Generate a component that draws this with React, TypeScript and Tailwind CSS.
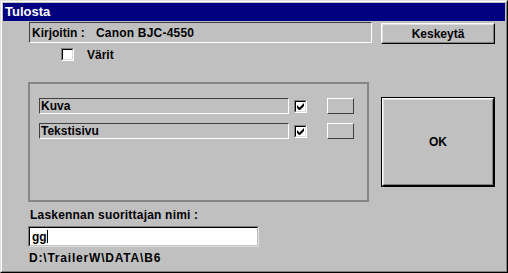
import React from 'react';

const font = { fontFamily: '"Liberation Sans", Arial, sans-serif' };

const Check = ({ checked }: { checked?: boolean }) => (
  <div className="w-[13px] h-[13px] bg-white border border-t-[#808080] border-l-[#808080] border-r-white border-b-white shrink-0">
    <div className="w-full h-full border border-t-black border-l-black border-r-[#dfdfdf] border-b-[#dfdfdf] flex items-center justify-center">
      {checked && (
        <svg width="7" height="7" viewBox="0 0 7 7">
          <path d="M0 2v3l2 2h1l4-4V0L2.5 4.5z" fill="black" />
        </svg>
      )}
    </div>
  </div>
);

const ListRow = ({ label }: { label: string }) => (
  <div className="flex items-center h-[16px]">
    <div className="w-[250px] h-[16px] border border-t-[#404040] border-l-[#404040] border-r-white border-b-white flex items-center pl-[1px] text-[12px] font-bold text-black leading-none">
      {label}
    </div>
    <div className="ml-[5px]">
      <Check checked />
    </div>
    <div className="ml-[20px] w-[27px] h-[16px] border border-t-white border-l-white border-r-[#404040] border-b-[#404040] bg-[#c0c0c0]" />
  </div>
);

export default function App() {
  return (
    <div className="w-[508px] h-[273px] bg-[#c0c0c0] border border-t-[#dfdfdf] border-l-[#dfdfdf] border-r-black border-b-black" style={font}>
      <div className="w-full h-full border border-t-white border-l-white border-r-[#808080] border-b-[#808080] p-[1px] flex flex-col">
        <div className="h-[18px] bg-[#000080] text-white font-bold text-[13px] flex items-center pl-[2px] shrink-0">
          Tulosta
        </div>
        <div className="flex">
          {/* left column */}
          <div className="ml-[25px] w-[344px] flex flex-col">
            <div className="mt-[1px] ml-[1px] h-[21px] border border-t-[#404040] border-l-[#404040] border-r-white border-b-white flex items-center text-[12px] font-bold text-black">
              <span className="w-[66px] pl-[2px]">Kirjoitin :</span>
              <span className="tracking-[0.2px]">Canon BJC-4550</span>
            </div>
            <div className="mt-[5px] ml-[33px] h-[13px] flex items-center">
              <Check />
              <span className="ml-[13px] text-[12px] font-bold text-black">Värit</span>
            </div>
            <div className="mt-[21px] w-[341px] h-[120px] border-2 border-[#868686] pt-[14px] pl-[9px] flex flex-col gap-[9px]">
              <ListRow label="Kuva" />
              <ListRow label="Tekstisivu" />
            </div>
            <div className="mt-[6px] ml-[2px] text-[12px] font-bold text-black leading-[14px] tracking-[0.2px]">
              Laskennan suorittajan nimi :
            </div>
            <div className="mt-[4px] w-[231px] h-[21px] bg-white border border-t-[#808080] border-l-[#808080] border-r-[#dfdfdf] border-b-[#dfdfdf]">
              <div className="w-full h-full border border-t-black border-l-black border-r-[#c0c0c0] border-b-[#c0c0c0] flex items-center pl-[2px] text-[12px] font-bold text-black">
                gg<span className="w-[1px] h-[13px] bg-black" />
              </div>
            </div>
            <div className="mt-[4px] ml-[1px] text-[12px] font-bold text-black leading-[14px] tracking-[0.8px]">
              D:\TrailerW\DATA\B6
            </div>
          </div>
          {/* right column */}
          <div className="ml-[9px] w-[114px] flex flex-col">
            <div className="mt-[2px] h-[21px] border border-t-white border-l-white border-r-black border-b-black">
              <div className="w-full h-full border border-t-[#dfdfdf] border-l-[#dfdfdf] border-r-[#808080] border-b-[#808080] flex items-center justify-center text-[12px] font-bold text-black">
                Keskeytä
              </div>
            </div>
            <div className="mt-[53px] h-[90px] border border-black">
              <div className="w-full h-full border border-t-white border-l-white border-r-black border-b-black">
                <div className="w-full h-full border border-t-[#dfdfdf] border-l-[#dfdfdf] border-r-[#808080] border-b-[#808080] flex items-center justify-center text-[12px] font-bold text-black">
                  OK
                </div>
              </div>
            </div>
          </div>
        </div>
      </div>
    </div>
  );
}
